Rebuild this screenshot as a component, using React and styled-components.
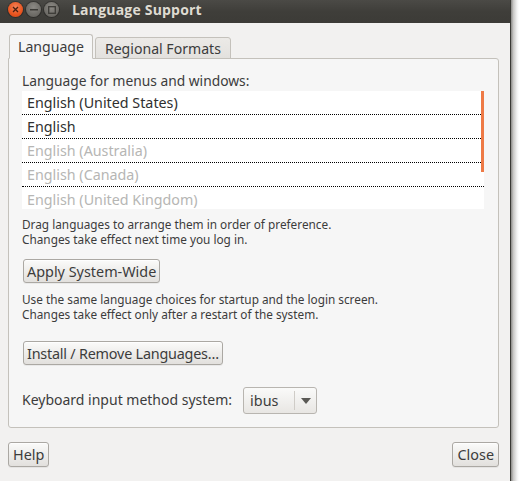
import React from "react";
import styled, { createGlobalStyle } from "styled-components";

const Global = createGlobalStyle`
  html, body { margin: 0; padding: 0; background: #ffffff; }
  body { font-family: "Noto Sans", "DejaVu Sans", sans-serif; }
`;

const Screen = styled.div`
  width: 519px;
  height: 481px;
  display: flex;
  overflow: hidden;
  background: #ffffff;
`;

const Window = styled.div`
  width: 510px;
  height: 481px;
  display: flex;
  flex-direction: column;
  background: #f2f1f0;
  border-right: 1px solid #3a3935;
  flex-shrink: 0;
`;

const Shadow = styled.div`
  flex: 1;
  background: linear-gradient(to right, #8a8986 0%, #c9c8c6 30%, #f2f2f2 75%, #ffffff 100%);
`;

const TitleBar = styled.div`
  height: 23px;
  display: flex;
  align-items: center;
  background: linear-gradient(to bottom, #4b4a46 0%, #3f3e3a 50%, #3c3b37 100%);
  padding-left: 8px;
  flex-shrink: 0;
`;

const Controls = styled.div`
  display: flex;
  align-items: center;
  gap: 3px;
  margin-top: -4px;
`;

const Ctl = styled.div`
  width: 15px;
  height: 15px;
  border-radius: 50%;
  display: flex;
  align-items: center;
  justify-content: center;
  background: ${(p) =>
    p.$close
      ? "radial-gradient(circle at 50% 35%, #f5835a 0%, #e9541e 60%, #c9441a 100%)"
      : "radial-gradient(circle at 50% 35%, #8c8a85 0%, #6f6d68 60%, #5c5a56 100%)"};
  box-shadow: 0 0 0 1px rgba(0,0,0,0.25);
`;

const Title = styled.div`
  margin-left: 13px;
  margin-top: -4px;
  font-family: "Open Sans", "DejaVu Sans", sans-serif;
  font-weight: 700;
  font-size: 14px;
  color: #dfdbd2;
  letter-spacing: 0.2px;
`;

const Body = styled.div`
  flex: 1;
  display: flex;
  flex-direction: column;
  padding: 11px 11px 0 8px;
`;

const TabRow = styled.div`
  display: flex;
  align-items: flex-end;
  height: 25px;
  padding-left: 1px;
  position: relative;
  z-index: 1;
  margin-bottom: -1px;
`;

const Tab = styled.div`
  height: ${(p) => (p.$active ? "25px" : "22px")};
  box-sizing: border-box;
  padding: 0 ${(p) => (p.$active ? "8px" : "9px")};
  margin-right: 2px;
  display: flex;
  align-items: center;
  font-size: 14.1px;
  color: #3c3c3c;
  border: 1px solid #c4c1bb;
  border-bottom: ${(p) => (p.$active ? "1px solid #f6f6f6" : "1px solid #c4c1bb")};
  border-radius: 3px 3px 0 0;
  background: ${(p) =>
    p.$active ? "#f6f6f6" : "linear-gradient(to bottom, #eceae7, #e3e1de)"};
  padding-top: ${(p) => (p.$active ? "0" : "1px")};
`;

const Panel = styled.div`
  width: 491px;
  height: 370px;
  box-sizing: border-box;
  border: 1px solid #c4c1bb;
  border-radius: 0 3px 3px 3px;
  background: #f6f6f6;
  padding: 13px 14px 0 13px;
  display: flex;
  flex-direction: column;
`;

const Label = styled.div`
  font-size: ${(p) => p.$fs || 13.8}px;
  color: #3c3c3c;
  line-height: 18px;
  margin-bottom: 1px;
`;

const ListBox = styled.div`
  width: 462px;
  height: 118px;
  background: #ffffff;
  position: relative;
  overflow: hidden;
`;

const Row = styled.div`
  height: 24px;
  box-sizing: border-box;
  padding-left: 5px;
  display: flex;
  align-items: center;
  font-size: 14.3px;
  color: ${(p) => (p.$dim ? "#b6b6b4" : "#2f2f2f")};
  border-bottom: ${(p) => (p.$last ? "none" : "1px dotted #000000")};
  margin-right: ${(p) => (p.$short ? "3px" : "0")};
`;

const ScrollThumb = styled.div`
  position: absolute;
  right: 0;
  top: 0;
  width: 3px;
  height: 81px;
  background: #ee7a46;
`;

const Note = styled.div`
  font-size: 11.8px;
  line-height: 15px;
  color: #3c3c3c;
  margin-top: ${(p) => p.$mt || 0}px;
`;

const Button = styled.button`
  font-family: inherit;
  font-size: 14.4px;
  letter-spacing: ${(p) => p.$ls || 0}px;
  color: #3c3c3c;
  height: ${(p) => p.$h || 24}px;
  padding: 0 ${(p) => p.$px || 3}px;
  border: 1px solid #aba8a3;
  border-radius: 3px;
  background: linear-gradient(to bottom, #fbfbfa 0%, #eeedeb 50%, #e2e0dd 100%);
  box-shadow: inset 0 1px 0 rgba(255,255,255,0.8), 0 1px 0 rgba(0,0,0,0.05);
  display: inline-flex;
  align-items: center;
  align-self: flex-start;
  margin: 0;
  margin-top: ${(p) => p.$mt || 0}px;
  margin-left: ${(p) => p.$ml || 0}px;
  cursor: default;
`;

const KbRow = styled.div`
  display: flex;
  align-items: center;
  margin-top: 22px;
`;

const Combo = styled.div`
  margin-left: 11px;
  width: 74px;
  height: 27px;
  box-sizing: border-box;
  border: 1px solid #b8b5b0;
  border-radius: 3px;
  background: linear-gradient(to bottom, #fafaf9 0%, #efeeec 60%, #e8e6e3 100%);
  display: flex;
  align-items: center;
`;

const ComboText = styled.div`
  flex: 1;
  padding-left: 6px;
  font-size: 14.4px;
  color: #3c3c3c;
`;

const ComboSep = styled.div`
  width: 1px;
  height: 19px;
  background: #cfccc7;
`;

const ComboArrow = styled.div`
  width: 21px;
  display: flex;
  justify-content: center;
  align-items: center;
`;

const Footer = styled.div`
  width: 491px;
  display: flex;
  justify-content: space-between;
  margin-top: 14px;
`;

export default function App() {
  const langs = [
    { t: "English (United States)" },
    { t: "English" },
    { t: "English (Australia)", dim: true },
    { t: "English (Canada)", dim: true },
    { t: "English (United Kingdom)", dim: true },
  ];
  return (
    <>
      <Global />
      <Screen>
        <Window>
          <TitleBar>
            <Controls>
              <Ctl $close>
                <svg width="7" height="7" viewBox="0 0 7 7">
                  <path d="M1 1L6 6M6 1L1 6" stroke="#4a2010" strokeWidth="1.3" />
                </svg>
              </Ctl>
              <Ctl>
                <svg width="8" height="2" viewBox="0 0 8 2">
                  <rect x="0" y="0" width="8" height="1.5" fill="#3c3b37" />
                </svg>
              </Ctl>
              <Ctl>
                <svg width="8" height="8" viewBox="0 0 8 8">
                  <rect x="0.7" y="0.7" width="6.6" height="6.6" fill="none" stroke="#3c3b37" strokeWidth="1.3" />
                </svg>
              </Ctl>
            </Controls>
            <Title>Language Support</Title>
          </TitleBar>
          <Body>
            <TabRow>
              <Tab $active>Language</Tab>
              <Tab>Regional Formats</Tab>
            </TabRow>
            <Panel>
              <Label>Language for menus and windows:</Label>
              <ListBox>
                {langs.map((l, i) => (
                  <Row key={i} $dim={l.dim} $last={i === langs.length - 1} $short={i < 3}>
                    {l.t}
                  </Row>
                ))}
                <ScrollThumb />
              </ListBox>
              <Note $mt={8}>
                Drag languages to arrange them in order of preference.
                <br />
                Changes take effect next time you log in.
              </Note>
              <Button $mt={12} $ml={1}>Apply System-Wide</Button>
              <Note $mt={9}>
                Use the same language choices for startup and the login screen.
                <br />
                Changes take effect only after a restart of the system.
              </Note>
              <Button $mt={19} $ml={1} $ls={-0.22}>Install / Remove Languages…</Button>
              <KbRow>
                <Label as="span" $fs={14}>Keyboard input method system:</Label>
                <Combo>
                  <ComboText>ibus</ComboText>
                  <ComboSep />
                  <ComboArrow>
                    <svg width="10" height="6" viewBox="0 0 10 6">
                      <path d="M0 0H10L5 6Z" fill="#5a5955" />
                    </svg>
                  </ComboArrow>
                </Combo>
              </KbRow>
            </Panel>
            <Footer>
              <Button $h={25} $px={4}>Help</Button>
              <Button $h={25} $px={4}>Close</Button>
            </Footer>
          </Body>
        </Window>
        <Shadow />
      </Screen>
    </>
  );
}
